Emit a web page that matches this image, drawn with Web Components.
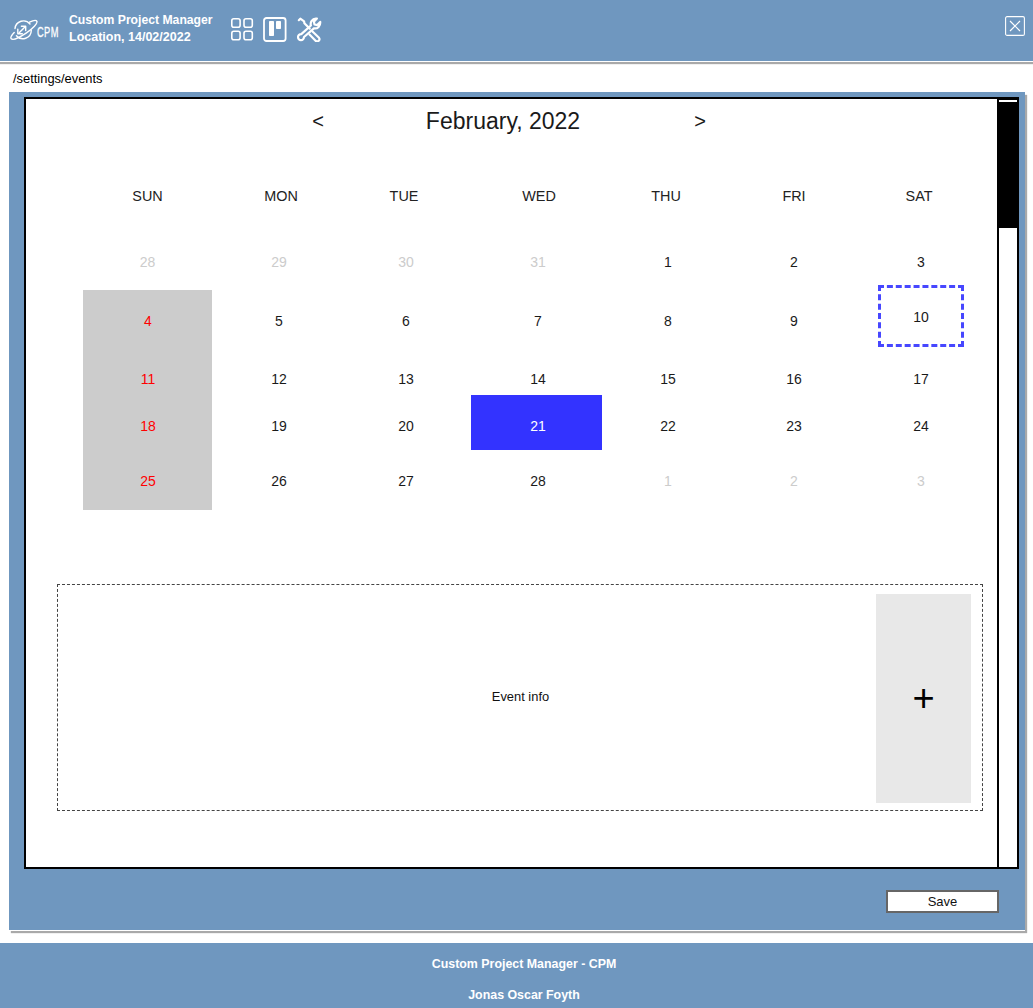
<!DOCTYPE html>
<html><head><meta charset="utf-8"><title>CPM</title>
<style>
html,body{margin:0;padding:0;background:#fff;}
body{width:1033px;height:1008px;overflow:hidden;font-family:"Liberation Sans",Arial,sans-serif;color:#000;display:flex;flex-direction:column;}
</style></head>
<body>
<cpm-header></cpm-header>
<cpm-breadcrumb path="/settings/events"></cpm-breadcrumb>
<cpm-panel>
  <cpm-scroll-box>
    <cpm-calendar></cpm-calendar>
    <cpm-event-info>Event info</cpm-event-info>
  </cpm-scroll-box>
  <cpm-save slot="actions">Save</cpm-save>
</cpm-panel>
<cpm-footer></cpm-footer>
<script>
function def(name, css, html){
  customElements.define(name, class extends HTMLElement{
    constructor(){super();const s=this.attachShadow({mode:'open'});s.innerHTML='<style>'+css+'</style>'+(typeof html==='function'?html(this):html);}
  });
}
def('cpm-header',`
:host{display:flex;align-items:center;height:61px;flex:none;background:#6f97bf;color:#fff;box-shadow:0 1px 0 #fff,0 3px 1px #a9a9a9;margin-bottom:3px;}
.logo{display:flex;align-items:center;margin-left:10px;width:50px;flex:none;position:relative;height:30px;margin-top:-2px}
.cpm{position:absolute;left:27px;top:9px;font-size:15px;line-height:16px;transform:scaleX(.62);transform-origin:0 50%;letter-spacing:.6px;-webkit-text-stroke:.3px #fff}
.txt{margin-left:9px;font-weight:700;line-height:17px;width:160px;flex:none;white-space:nowrap;margin-top:-4px}
.l1{font-size:12.200px}
.l2{font-size:12.500px}
.ic{display:flex;align-items:center;gap:9px;margin-left:1px;margin-top:-3px}
.tools{margin-left:1px}
svg{display:block}
.close{margin-left:auto;margin-right:8px;margin-top:-9px}
`,`
<div class="logo">
 <svg width="28" height="22" viewBox="0 0 28 22" fill="none" stroke="#fff" stroke-width="1.400" stroke-linecap="round" stroke-linejoin="round">
  <path d="M5 9.500A8.500 8.500 0 0 1 20 5"/><path d="M21.300 11.500A8.500 8.500 0 0 1 6.400 16.800"/>
  <path d="M19.500 3.200c3.800-1.800 6.800-2 7.400-.9 1 1.900-4 7.300-10.800 11.800C9.300 18.600 2.800 21.300 1.200 19.700c-.9-.9.300-3.300 3-6.200"/>
  <path d="M9.200 13.800l6.200-6.200M11.400 7.200h4.300v4.300"/><path d="M7.800 10.200v4.500h4.500"/>
 </svg>
 <span class="cpm">CPM</span>
</div>
<div class="txt"><div class="l1">Custom Project Manager</div><div class="l2">Location, 14/02/2022</div></div>
<div class="ic">
 <svg width="24" height="24" viewBox="0 0 24 24" fill="none" stroke="#fff" stroke-width="1.600"><rect x="1.800" y="1.800" width="8.300" height="8.400" rx="2"/><rect x="14" y="1.800" width="8.300" height="8.400" rx="2"/><rect x="1.800" y="14.300" width="8.300" height="8.400" rx="2"/><rect x="14" y="14.300" width="8.300" height="8.400" rx="2"/></svg>
 <svg width="24" height="25" viewBox="0 0 24 25" fill="none"><rect x="1" y="1" width="21.600" height="23" rx="2.500" stroke="#fff" stroke-width="1.800"/><rect x="6" y="4" width="5" height="15" rx=".8" fill="#fff"/><rect x="13" y="4" width="5" height="8" rx=".8" fill="#fff"/></svg>
 <svg class="tools" width="25" height="25" viewBox="0 0 25 25" fill="none" stroke="#fff" stroke-width="2.200" stroke-linejoin="round" stroke-linecap="round">
  <path d="M1.800 3.200L3.300 1.700l3.800 2.600.3 2 5.300 5.300"/>
  <path d="M15.500 14.500l6.500 6.300a2.300 2.300 0 0 1-3.200 3.200L12.500 17.500"/>
  <path d="M13.900 8.500c-.9-3.400 1.300-6.700 5-7l1 .1-3 3.200.6 2.700 2.700.6 3-3.200c.4 3.900-2.600 7.300-6.300 6.400L7 20a3 3 0 1 1-2.700-2.900z"/>
 </svg>
</div>
<svg class="close" width="20" height="20" viewBox="0 0 20 20" fill="none" stroke="#fff"><rect x=".6" y=".6" width="18.800" height="18.800" rx="1.500" stroke-width="1.100"/><path d="M5 5l10 10M15 5L5 15" stroke-width="1.200"/></svg>
`);
def('cpm-breadcrumb',`:host{display:block;flex:none;height:28px;padding-left:13px;font-size:12.900px;line-height:30px;color:#000}`,
 t=>`<span>${t.getAttribute('path')}</span>`);
def('cpm-panel',`
:host{display:flex;flex-direction:column;flex:none;margin:0 8px 0 9px;height:838px;box-sizing:border-box;background:#6f97bf;padding:5px 6px 17px 15px;box-shadow:0 1px 0 #fff,2px 3px 1px #a9a9a9;}
.actions{display:flex;justify-content:flex-end;margin-top:21px;padding-right:20px}
`,`<slot></slot><div class="actions"><slot name="actions"></slot></div>`);
def('cpm-scroll-box',`
:host{display:flex;flex:1;min-height:0;background:#fff;border:2px solid #000;}
.main{flex:1;min-width:0;display:flex;flex-direction:column;}
.bar{flex:none;width:18px;border-left:2px solid #000;background:#fff;display:flex;flex-direction:column;}
.thumb{height:129px;background:#000;}
.thumb i{display:block;height:2px;background:#fff;position:relative;top:1px}
`,`<div class="main"><slot></slot></div><div class="bar"><div class="thumb"><i></i></div></div>`);
const weeks=[
 [['28','m'],['29','m'],['30','m'],['31','m'],['1'],['2'],['3']],
 [['4','s'],['5'],['6'],['7'],['8'],['9'],['10','f']],
 [['11','s'],['12'],['13'],['14'],['15'],['16'],['17']],
 [['18','s'],['19'],['20'],['21','a'],['22'],['23'],['24']],
 [['25','s'],['26'],['27'],['28'],['1','m'],['2','m'],['3','m']]];
def('cpm-calendar',`
:host{display:block;font-size:14px;color:#1a1a1a}
.title{display:grid;grid-template-columns:298px 102px 154px 126px;height:44px;align-items:center;}
.title .t{font-size:23px;white-space:nowrap;justify-self:center;grid-column:3}
.title .ar{font-size:20px;text-align:right;}
.grid{display:grid;margin-left:57px;width:897px;grid-template-columns:129px 134px 120px 144px 116px 136px 118px;grid-template-rows:56px 66px 62px 43px 55px 60px;margin-top:25px}
.h{display:flex;align-items:center;justify-content:center;position:relative;font-size:14.400px;color:#222}
.c{display:flex;align-items:center;justify-content:center;box-sizing:border-box}
.m{color:#ccc}
.s{background:#ccc;color:#f00;padding-left:1px}
.a{background:#33f;color:#fff;margin:0 8px 0 5px;padding:6px 0 0 3px}
.f{margin:-5px 16px 5px 16px;border:3px dashed #4747ff;padding-top:1px}
.r0{padding-top:10px}
.r2{padding-top:11px}
.r3{padding-top:6px}
.r4{padding-top:1px}
`,()=>{
 const hd=[['SUN',0],['MON',2],['TUE',-2],['WED',1],['THU',-2],['FRI',0],['SAT',-2]];
 let g=hd.map(([d,o])=>`<div class="h" style="left:${o}px">${d}</div>`).join('');
 weeks.forEach((w,i)=>{w.forEach(([n,k])=>{g+=`<div class="c ${k||''} r${i}">${n}</div>`;});});
 return `<div class="title"><span class="ar">&lt;</span><span class="t">February, 2022</span><span class="ar" style="grid-column:4">&gt;</span></div><div class="grid">${g}</div>`;
});
def('cpm-event-info',`
:host{display:flex;align-items:stretch;box-sizing:border-box;width:926px;height:227px;margin:74px 0 0 31px;border:1px dashed #444;padding:9px 11px 7px 0;font-size:12.900px;color:#111;flex:none}
.t{flex:1;display:flex;align-items:center;justify-content:center;padding-left:107px;padding-bottom:5px;}
.p{flex:none;width:95px;background:#e8e8e8;display:flex;align-items:center;justify-content:center;font-size:38px;line-height:36px;color:#000;padding-bottom:2px;box-sizing:border-box}
`,`<div class="t"><slot></slot></div><div class="p">+</div>`);
def('cpm-save',`
:host{display:flex;align-items:center;justify-content:center;box-sizing:border-box;width:113px;height:23px;background:#fff;border:2px solid #666;font-size:13px;color:#111;padding-bottom:1px}
`,`<slot></slot>`);
def('cpm-footer',`
:host{display:block;flex:none;margin-top:13px;height:65px;background:#6f97bf;color:#fff;font-size:12.400px;font-weight:700;text-align:center;padding:6px 0 0 15px;box-sizing:border-box;overflow:hidden}
div{height:31px;line-height:31px}
`,`<div>Custom Project Manager - CPM</div><div>Jonas Oscar Foyth</div>`);
</script>
</body></html>
